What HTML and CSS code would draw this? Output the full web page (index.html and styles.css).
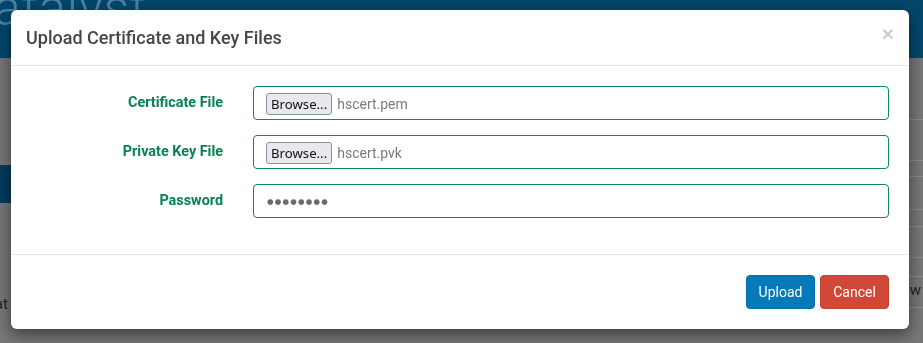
FILE: index.html
```html
<!DOCTYPE html>
<html lang="en">
<head>
<meta charset="utf-8">
<title>Upload Certificate and Key Files</title>
<link rel="stylesheet" href="styles.css">
</head>
<body>
<div class="page">
  <header class="page-header">
    <span class="brand">atalyst</span>
  </header>
  <div class="page-main">
    <aside class="sidebar">
      <div class="side-mark">l</div>
      <div class="side-active"></div>
      <div class="side-text">rat</div>
    </aside>
    <section class="content">
      <div class="trow h62"></div>
      <div class="trow h41"></div>
      <div class="trow h16"></div>
      <div class="trow h33"></div>
      <div class="trow h17"></div>
      <div class="trow h31"></div>
      <div class="trow h19 with-text"><span>ew</span></div>
      <div class="trow h31"></div>
    </section>
  </div>
</div>

<div class="modal" role="dialog">
  <div class="modal-header">
    <h4 class="modal-title">Upload Certificate and Key Files</h4>
    <button class="close" type="button">&times;</button>
  </div>
  <div class="modal-body">
    <div class="form-row">
      <label class="form-label">Certificate File</label>
      <div class="form-control file-control">
        <span class="browse">Browse...</span>
        <span class="file-name">hscert.pem</span>
      </div>
    </div>
    <div class="form-row">
      <label class="form-label">Private Key File</label>
      <div class="form-control file-control">
        <span class="browse">Browse...</span>
        <span class="file-name">hscert.pvk</span>
      </div>
    </div>
    <div class="form-row">
      <label class="form-label">Password</label>
      <div class="form-control pw-control">
        <span class="dots">&#9679;&#9679;&#9679;&#9679;&#9679;&#9679;&#9679;&#9679;</span>
      </div>
    </div>
  </div>
  <div class="modal-footer">
    <button class="btn btn-primary" type="button">Upload</button>
    <button class="btn btn-danger" type="button">Cancel</button>
  </div>
</div>
</body>
</html>
```

FILE: styles.css
```css
* { box-sizing: border-box; }

html, body {
  margin: 0;
  padding: 0;
  width: 923px;
  height: 343px;
  overflow: hidden;
}

body {
  background: #777777;
  font-family: Roboto, "Liberation Sans", Arial, sans-serif;
  font-size: 14px;
  color: #333;
}

/* ---------- background page (dimmed) ---------- */
.page-header {
  height: 58px;
  background: #04466c;
  overflow: hidden;
}
.brand {
  display: block;
  margin: -22px 0 0 -6px;
  font-size: 50px;
  font-weight: 300;
  line-height: 60px;
  color: #4d82a6;
  letter-spacing: 1px;
}
.page-main {
  display: flex;
}
.sidebar {
  width: 240px;
  flex: none;
}
.side-mark {
  margin-top: 78px;
  height: 29px;
  font-size: 15px;
  line-height: 14px;
  color: #222;
  text-indent: -4px;
}
.side-active {
  height: 38px;
  background: #033b5c;
}
.side-text {
  margin-top: 92px;
  font-size: 15px;
  color: #222;
  text-indent: -10px;
}
.content {
  flex: 1;
}
.trow {
  border-bottom: 1px solid #8a8a8a;
}
.h62 { height: 62px; }
.h41 { height: 41px; }
.h16 { height: 16px; }
.h33 { height: 33px; }
.h17 { height: 17px; }
.h31 { height: 31px; }
.h19 { height: 19px; }
.with-text {
  display: flex;
  justify-content: flex-end;
  align-items: flex-end;
  font-size: 15px;
  color: #222;
  line-height: 16px;
}
.with-text span {
  margin-right: 2px;
  margin-bottom: -22px;
}

/* ---------- modal ---------- */
.modal {
  position: fixed;
  left: 11px;
  top: 10px;
  width: 898px;
  background: #fff;
  border-radius: 6px;
  box-shadow: 0 5px 15px rgba(0, 0, 0, 0.5);
}
.modal-header {
  display: flex;
  align-items: center;
  justify-content: space-between;
  height: 56px;
  padding: 0 15px;
  border-bottom: 1px solid #e5e5e5;
}
.modal-title {
  margin: -1px 0 0 0;
  font-size: 18px;
  font-weight: 500;
  line-height: 25px;
  color: #464646;
}
.close {
  border: 0;
  background: none;
  padding: 0;
  margin: -8px 0 0 0;
  font-family: "Liberation Sans", Arial, sans-serif;
  font-size: 21px;
  font-weight: 700;
  line-height: 1;
  color: #000;
  opacity: 0.2;
  cursor: pointer;
}

.modal-body {
  padding: 20px 20px 6px;
}
.modal-body::after {
  content: "";
  display: block;
  height: 15px;
}
.form-row {
  display: grid;
  grid-template-columns: 192px 1fr;
  column-gap: 30px;
  align-items: center;
  margin-bottom: 15px;
}
.form-label {
  text-align: right;
  font-weight: 700;
  font-size: 14.4px;
  color: #08834f;
  margin-top: -1px;
}
.form-control {
  height: 34px;
  border: 1px solid #0b8a59;
  border-radius: 4px;
  padding: 0 12px;
  display: flex;
  align-items: center;
  background: #fff;
}
.browse {
  display: inline-block;
  height: 22px;
  padding: 0 4px;
  border: 1px solid #8f8f9d;
  border-radius: 3px;
  background: #e9e9ed;
  font-family: "Noto Sans", "DejaVu Sans", sans-serif;
  font-size: 13.2px;
  line-height: 20px;
  color: #111;
  margin-top: 1px;
}
.file-name {
  margin-left: 5px;
  font-size: 14px;
  color: #7a7a7a;
  margin-top: 1px;
}
.dots {
  font-family: "DejaVu Sans", sans-serif;
  font-size: 7.5px;
  letter-spacing: 1.2px;
  color: #6a6a6a;
  margin-left: 1px;
}

.modal-footer {
  display: flex;
  justify-content: flex-end;
  gap: 5px;
  padding: 20px;
  border-top: 1px solid #e5e5e5;
}
.btn {
  height: 34px;
  width: 69px;
  border: 1px solid transparent;
  border-radius: 4px;
  font-family: Roboto, "Liberation Sans", Arial, sans-serif;
  font-size: 14px;
  color: #fff;
  padding: 0;
  cursor: pointer;
}
.btn-primary {
  background: #0679b9;
  border-color: #066fa9;
}
.btn-danger {
  background: #d14836;
  border-color: #c2412f;
}
```
